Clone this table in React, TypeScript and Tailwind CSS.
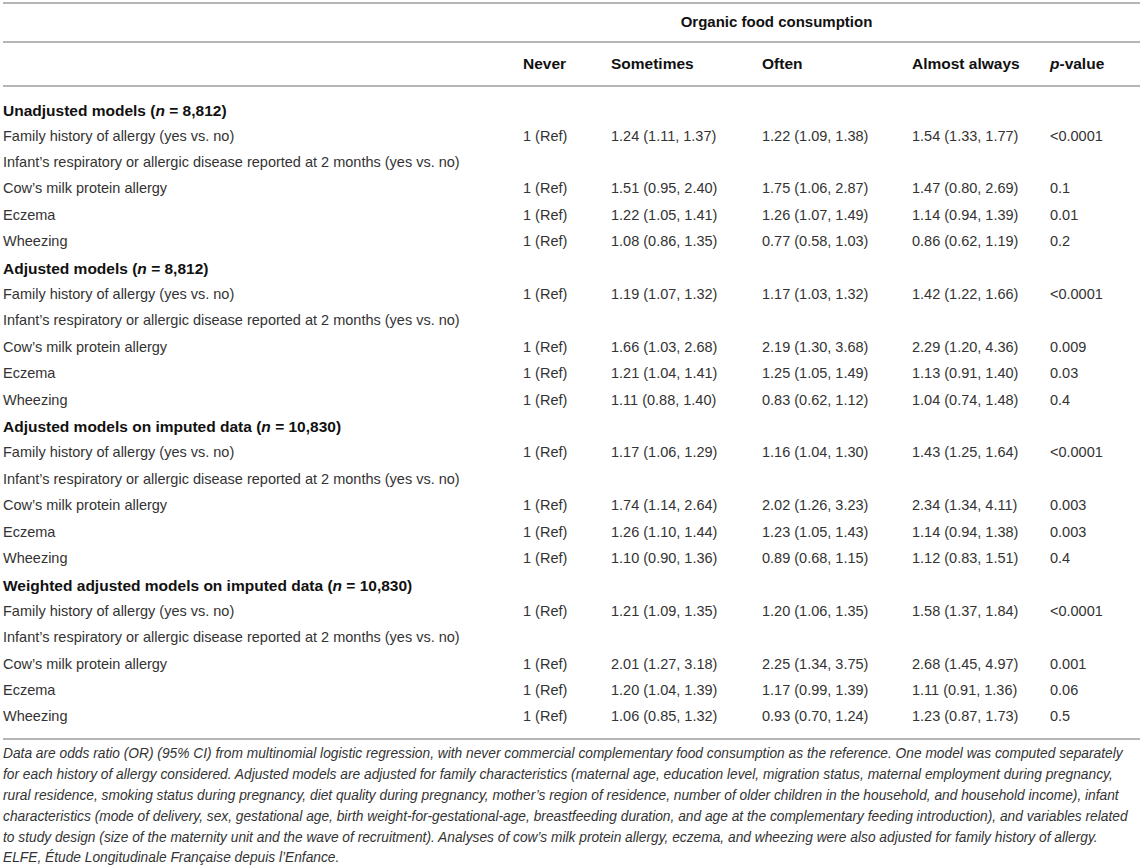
type Row = { label: string; values?: string[] };
type Section = { title: string; n: string; rows: Row[] };

const INFANT = 'Infant’s respiratory or allergic disease reported at 2 months (yes vs. no)';

const sections: Section[] = [
  {
    title: 'Unadjusted models',
    n: '8,812',
    rows: [
      { label: 'Family history of allergy (yes vs. no)', values: ['1 (Ref)', '1.24 (1.11, 1.37)', '1.22 (1.09, 1.38)', '1.54 (1.33, 1.77)', '<0.0001'] },
      { label: INFANT },
      { label: 'Cow’s milk protein allergy', values: ['1 (Ref)', '1.51 (0.95, 2.40)', '1.75 (1.06, 2.87)', '1.47 (0.80, 2.69)', '0.1'] },
      { label: 'Eczema', values: ['1 (Ref)', '1.22 (1.05, 1.41)', '1.26 (1.07, 1.49)', '1.14 (0.94, 1.39)', '0.01'] },
      { label: 'Wheezing', values: ['1 (Ref)', '1.08 (0.86, 1.35)', '0.77 (0.58, 1.03)', '0.86 (0.62, 1.19)', '0.2'] },
    ],
  },
  {
    title: 'Adjusted models',
    n: '8,812',
    rows: [
      { label: 'Family history of allergy (yes vs. no)', values: ['1 (Ref)', '1.19 (1.07, 1.32)', '1.17 (1.03, 1.32)', '1.42 (1.22, 1.66)', '<0.0001'] },
      { label: INFANT },
      { label: 'Cow’s milk protein allergy', values: ['1 (Ref)', '1.66 (1.03, 2.68)', '2.19 (1.30, 3.68)', '2.29 (1.20, 4.36)', '0.009'] },
      { label: 'Eczema', values: ['1 (Ref)', '1.21 (1.04, 1.41)', '1.25 (1.05, 1.49)', '1.13 (0.91, 1.40)', '0.03'] },
      { label: 'Wheezing', values: ['1 (Ref)', '1.11 (0.88, 1.40)', '0.83 (0.62, 1.12)', '1.04 (0.74, 1.48)', '0.4'] },
    ],
  },
  {
    title: 'Adjusted models on imputed data',
    n: '10,830',
    rows: [
      { label: 'Family history of allergy (yes vs. no)', values: ['1 (Ref)', '1.17 (1.06, 1.29)', '1.16 (1.04, 1.30)', '1.43 (1.25, 1.64)', '<0.0001'] },
      { label: INFANT },
      { label: 'Cow’s milk protein allergy', values: ['1 (Ref)', '1.74 (1.14, 2.64)', '2.02 (1.26, 3.23)', '2.34 (1.34, 4.11)', '0.003'] },
      { label: 'Eczema', values: ['1 (Ref)', '1.26 (1.10, 1.44)', '1.23 (1.05, 1.43)', '1.14 (0.94, 1.38)', '0.003'] },
      { label: 'Wheezing', values: ['1 (Ref)', '1.10 (0.90, 1.36)', '0.89 (0.68, 1.15)', '1.12 (0.83, 1.51)', '0.4'] },
    ],
  },
  {
    title: 'Weighted adjusted models on imputed data',
    n: '10,830',
    rows: [
      { label: 'Family history of allergy (yes vs. no)', values: ['1 (Ref)', '1.21 (1.09, 1.35)', '1.20 (1.06, 1.35)', '1.58 (1.37, 1.84)', '<0.0001'] },
      { label: INFANT },
      { label: 'Cow’s milk protein allergy', values: ['1 (Ref)', '2.01 (1.27, 3.18)', '2.25 (1.34, 3.75)', '2.68 (1.45, 4.97)', '0.001'] },
      { label: 'Eczema', values: ['1 (Ref)', '1.20 (1.04, 1.39)', '1.17 (0.99, 1.39)', '1.11 (0.91, 1.36)', '0.06'] },
      { label: 'Wheezing', values: ['1 (Ref)', '1.06 (0.85, 1.32)', '0.93 (0.70, 1.24)', '1.23 (0.87, 1.73)', '0.5'] },
    ],
  },
];

const footnote = [
  'Data are odds ratio (OR) (95% CI) from multinomial logistic regression, with never commercial complementary food consumption as the reference. One model was computed separately',
  'for each history of allergy considered. Adjusted models are adjusted for family characteristics (maternal age, education level, migration status, maternal employment during pregnancy,',
  'rural residence, smoking status during pregnancy, diet quality during pregnancy, mother’s region of residence, number of older children in the household, and household income), infant',
  'characteristics (mode of delivery, sex, gestational age, birth weight-for-gestational-age, breastfeeding duration, and age at the complementary feeding introduction), and variables related',
  'to study design (size of the maternity unit and the wave of recruitment). Analyses of cow’s milk protein allergy, eczema, and wheezing were also adjusted for family history of allergy.',
];

// label | never | sometimes | often | almost always | p-value
const cols = 'grid grid-cols-[520px_88px_151px_150px_138px_90px]';

function SectionRows({ section }: { section: Section }) {
  return (
    <>
      <div className={`${cols} h-[26.4px] items-center`}>
        <div className="col-span-6 whitespace-nowrap text-[15.5px] font-bold text-[#111]">
          {section.title} (<i>n</i> = {section.n})
        </div>
      </div>
      {section.rows.map((row, i) => (
        <div key={i} className={`${cols} h-[26.4px] items-center`}>
          <div className={row.values ? '' : 'col-span-6 whitespace-nowrap'}>{row.label}</div>
          {row.values?.map((v, j) => (
            <div key={j} className="whitespace-nowrap">{v}</div>
          ))}
        </div>
      ))}
    </>
  );
}

export default function App() {
  return (
    <div className="w-[1143px] h-[868px] overflow-hidden bg-white px-[3px] pt-[2px] font-['Liberation_Sans',Arial,sans-serif] text-[14.5px] text-[#333]">
      <div className="border-t-2 border-[#b5b5b5]">
        <div className={`${cols} h-[39px] items-center border-b-2 border-[#b5b5b5]`}>
          <div />
          <div className="col-span-4 pr-[20px] text-center text-[15px] font-bold text-[#111]">Organic food consumption</div>
          <div />
        </div>
        <div className={`${cols} h-[44px] items-center border-b-2 border-[#b5b5b5] text-[15.5px] font-bold text-[#111]`}>
          <div />
          <div>Never</div>
          <div>Sometimes</div>
          <div>Often</div>
          <div>Almost always</div>
          <div>
            <i>p</i>-value
          </div>
        </div>
        <div className="border-b-2 border-[#b5b5b5] pt-[10px] pb-[8px]">
          {sections.map((s, i) => (
            <SectionRows key={i} section={s} />
          ))}
        </div>
      </div>
      <div className="pt-[3px] text-[13.75px] italic leading-[21px] text-[#333]">
        {footnote.map((line, i) => (
          <div key={i} className="whitespace-nowrap">{line}</div>
        ))}
        <div className="whitespace-nowrap leading-[16px] pt-[2px]">ELFE, Étude Longitudinale Française depuis l’Enfance.</div>
      </div>
    </div>
  );
}
